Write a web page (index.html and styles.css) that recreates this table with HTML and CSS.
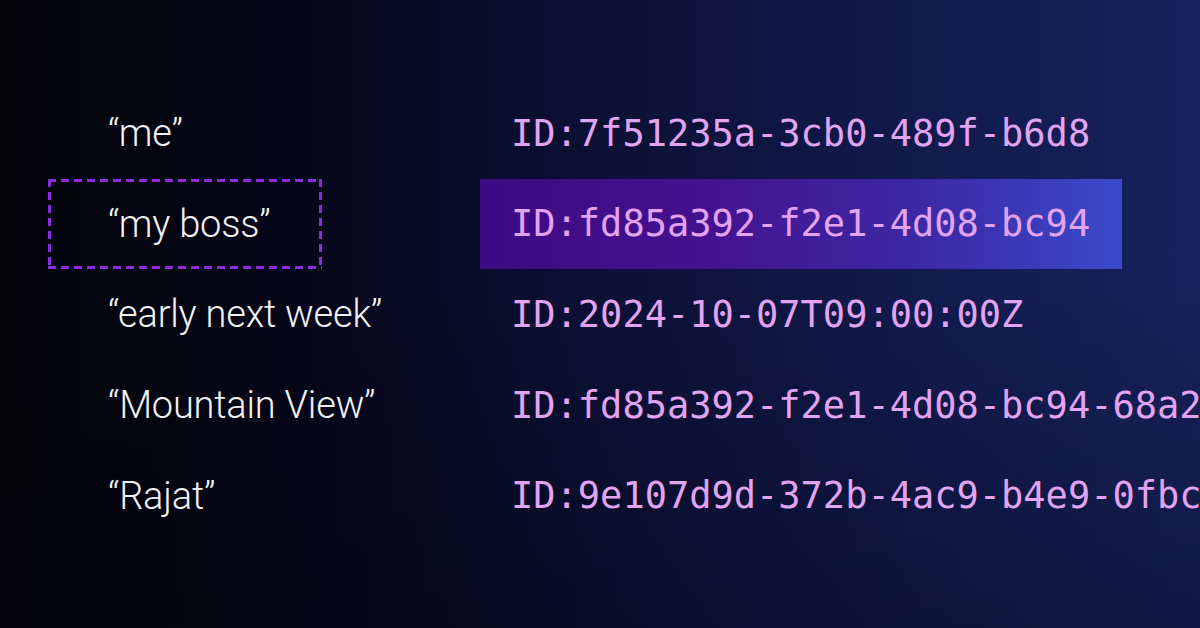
FILE: index.html
```html
<!DOCTYPE html>
<html>
<head>
<meta charset="utf-8">
<link rel="stylesheet" href="styles.css">
</head>
<body>
<div class="stage">
  <div class="table">
    <div class="term"><span>“me”</span></div>
    <div class="id"><span>ID:7f51235a-3cb0-489f-b6d8</span></div>

    <div class="term selected"><span>“my boss”</span></div>
    <div class="id highlight"><span>ID:fd85a392-f2e1-4d08-bc94</span></div>

    <div class="term"><span>“early next week”</span></div>
    <div class="id"><span>ID:2024-10-07T09:00:00Z</span></div>

    <div class="term"><span>“Mountain View”</span></div>
    <div class="id"><span>ID:fd85a392-f2e1-4d08-bc94-68a2</span></div>

    <div class="term"><span>“Rajat”</span></div>
    <div class="id"><span>ID:9e107d9d-372b-4ac9-b4e9-0fbc</span></div>
  </div>
</div>
</body>
</html>
```

FILE: styles.css
```css
html, body {
  margin: 0;
  padding: 0;
  width: 1200px;
  height: 628px;
  overflow: hidden;
  background: #050510;
}

.stage {
  width: 1200px;
  height: 628px;
  box-sizing: border-box;
  padding: 88px 0 0 48px;
  overflow: hidden;
  background:
    linear-gradient(180deg, rgba(0,0,0,0) 0%, rgba(0,0,0,0) 45%, rgba(0,0,8,0.28) 100%),
    linear-gradient(90deg, #030308 0%, #06061a 25%, #0c1035 50%, #111a4c 75%, #16225c 100%);
}

.table {
  display: grid;
  grid-template-columns: 274px 642px;
  grid-auto-rows: 90.6px;
  column-gap: 158px;
}

.term {
  display: flex;
  align-items: center;
  padding-left: 60px;
  box-sizing: border-box;
  font-family: Roboto, "Liberation Sans", sans-serif;
  font-weight: 300;
  font-size: 38px;
  color: #f2f2f4;
  white-space: nowrap;
  letter-spacing: -0.2px;
}

.term.selected {
  background:
    repeating-linear-gradient(90deg, #8c2ce0 0 8px, transparent 8px 13px) left top / 100% 3px no-repeat,
    repeating-linear-gradient(90deg, #8c2ce0 0 8px, transparent 8px 13px) left bottom / 100% 3px no-repeat,
    repeating-linear-gradient(180deg, #8c2ce0 0 8px, transparent 8px 13px) left top / 3px 100% no-repeat,
    repeating-linear-gradient(180deg, #8c2ce0 0 8px, transparent 8px 13px) right top / 3px 100% no-repeat;
}

.id {
  display: flex;
  align-items: center;
  padding-left: 31px;
  box-sizing: border-box;
  font-family: "DejaVu Sans Mono", monospace;
  font-size: 37px;
  color: #e2a4f0;
  white-space: nowrap;
}

.id.highlight {
  background: linear-gradient(90deg, #3c0a82 0%, #45128f 35%, #3c2aa6 70%, #3a4acb 100%);
}
```
